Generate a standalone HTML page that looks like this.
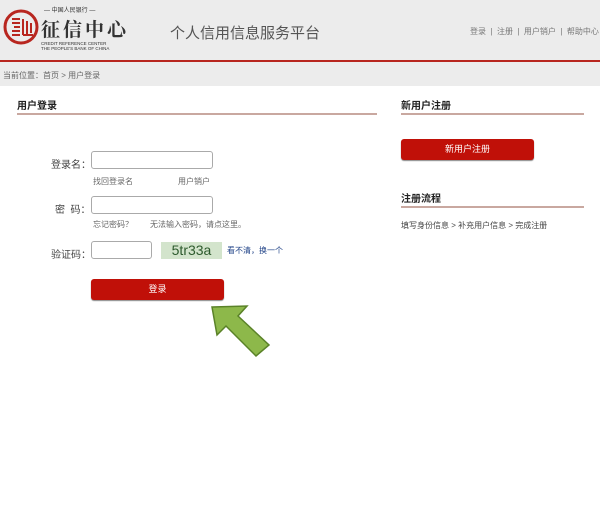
<!DOCTYPE html><html><head><meta charset="utf-8"><style>
body{margin:0;width:600px;height:507px;background:#fff;font-family:"Liberation Sans","Noto Sans CJK SC",sans-serif;position:relative;overflow:hidden;color:#333}
.a{position:absolute;white-space:nowrap}
.s{font-size:8px;color:#666}
.inp{position:absolute;border:1px solid #aaa;border-radius:3px;background:#fff;box-sizing:border-box}
.btn{position:absolute;background:#c01008;border-radius:3px;color:#fff;font-size:9px;text-align:center;box-shadow:0 1px 1px #888}
.h{font-size:10px;font-weight:bold;color:#222}
.ln{position:absolute;height:2px;background:#c9a8a0}
</style></head><body>
<div class="a" style="left:0;top:0;width:600px;height:60px;background:#ececec"></div>
<div class="a" style="left:0;top:60px;width:600px;height:2px;background:#b8261f"></div>
<div class="a" style="left:0;top:62px;width:600px;height:24px;background:#ececec"></div>
<svg class="a" style="left:3px;top:9px" width="36" height="36" viewBox="0 0 36 36"><circle cx="18" cy="18" r="16" fill="none" stroke="#b8261f" stroke-width="3"/><path d="M9 10h8M9 14h8M11 18h6M9 22h8M9 26h8M20 10v16M24 12v14M28 14v10M20 26h10" stroke="#b8261f" stroke-width="2" fill="none"/></svg>
<div class="a" style="left:44px;top:5px;font-size:6px;color:#333">— 中国人民银行 —</div>
<div class="a" style="left:41px;top:15px;font-size:19px;font-family:'Noto Serif CJK SC',serif;color:#333;font-weight:bold;letter-spacing:3px">征信中心</div>
<div class="a" style="left:41px;top:41px;font-size:4.5px;line-height:5px;color:#333">CREDIT REFERENCE CENTER<br>THE PEOPLE'S BANK OF CHINA</div>
<div class="a" style="left:170px;top:22px;font-size:15px;color:#555">个人信用信息服务平台</div>
<div class="a s" style="left:470px;top:26px;color:#777">登录 &nbsp;|&nbsp; 注册 &nbsp;|&nbsp; 用户销户 &nbsp;|&nbsp; 帮助中心</div>
<div class="a s" style="left:3px;top:70px">当前位置：首页 &gt; 用户登录</div>
<div class="a h" style="left:17px;top:97px">用户登录</div>
<div class="ln" style="left:17px;top:113px;width:360px"></div>
<div class="a h" style="left:401px;top:97px">新用户注册</div>
<div class="ln" style="left:401px;top:113px;width:183px"></div>
<div class="btn" style="left:401px;top:139px;width:133px;height:21px;line-height:21px">新用户注册</div>
<div class="a h" style="left:401px;top:190px">注册流程</div>
<div class="ln" style="left:401px;top:206px;width:183px"></div>
<div class="a s" style="left:401px;top:220px;color:#444">填写身份信息 &gt; 补充用户信息 &gt; 完成注册</div>
<div class="a" style="left:51px;top:156px;font-size:10px;color:#444">登录名：</div>
<div class="inp" style="left:91px;top:151px;width:122px;height:18px"></div>
<div class="a s" style="left:93px;top:176px">找回登录名</div>
<div class="a s" style="left:178px;top:176px">用户销户</div>
<div class="a" style="left:55px;top:201px;font-size:10px;color:#444">密 &nbsp;码：</div>
<div class="inp" style="left:91px;top:196px;width:122px;height:18px"></div>
<div class="a s" style="left:93px;top:219px">忘记密码？</div>
<div class="a s" style="left:150px;top:219px">无法输入密码，请点这里。</div>
<div class="a" style="left:51px;top:246px;font-size:10px;color:#444">验证码：</div>
<div class="inp" style="left:91px;top:241px;width:61px;height:18px"></div>
<div class="a" style="left:161px;top:242px;width:61px;height:17px;background:#d3e4cc;color:#2d5a2d;font-size:14px;line-height:17px;text-align:center">5tr33a</div>
<div class="a" style="left:227px;top:245px;font-size:8px;color:#224488">看不清，换一个</div>
<div class="btn" style="left:91px;top:279px;width:133px;height:21px;line-height:21px">登录</div>
<svg class="a" style="left:205px;top:303px" width="70" height="55" viewBox="0 0 70 55"><path d="M7 4 L42 3 L33 13 L64 42 L51 53 L21 23 L12 32 Z" fill="#8db84a" stroke="#5a8228" stroke-width="1.5"/></svg>
</body></html>
